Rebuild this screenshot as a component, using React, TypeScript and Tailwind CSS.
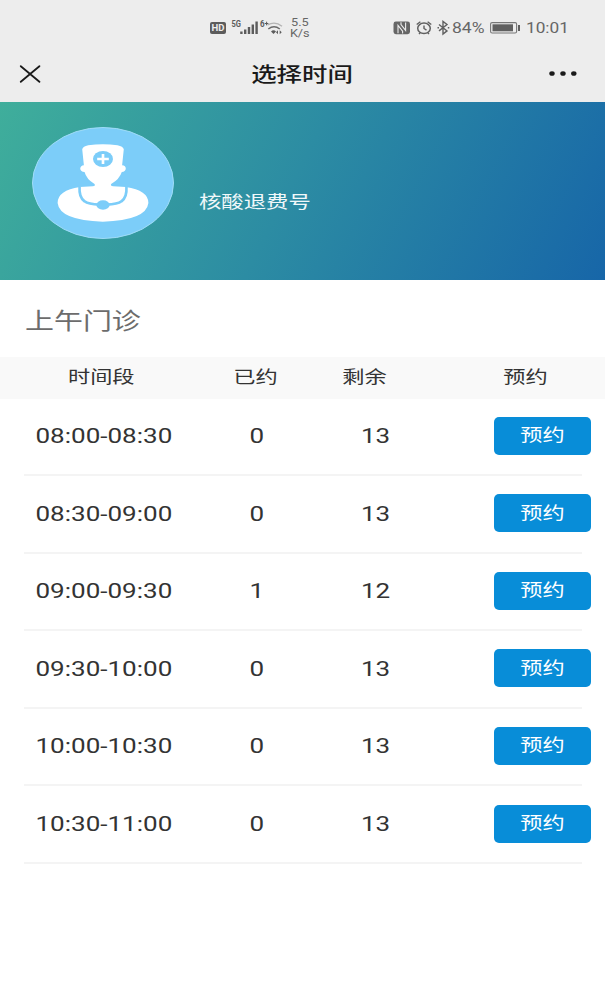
import { ReactNode } from "react";

type Slot = {
  time: string;
  booked: number;
  left: number;
};

const slots: Slot[] = [
  { time: "08:00-08:30", booked: 0, left: 13 },
  { time: "08:30-09:00", booked: 0, left: 13 },
  { time: "09:00-09:30", booked: 1, left: 12 },
  { time: "09:30-10:00", booked: 0, left: 13 },
  { time: "10:00-10:30", booked: 0, left: 13 },
  { time: "10:30-11:00", booked: 0, left: 13 },
];

type WideProps = {
  children: ReactNode;
  className?: string;
};

// wide lettering used all over the page
function Wide({ children, className = "" }: WideProps) {
  return (
    <span className={`inline-block whitespace-nowrap scale-x-[1.27] ${className}`}>
      {children}
    </span>
  );
}

function StatusBar() {
  return (
    <div className="flex h-[46px] items-start pl-[210px] pt-[17px] text-[#666]">
      <svg width="74" height="22" viewBox="210 17 74 22" fill="none">
        <rect x="210" y="22" width="16" height="12" rx="2" fill="#5c5c5c" />
        <text x="211.5" y="31.4" fontSize="9" fontWeight="700" textLength="13" lengthAdjust="spacingAndGlyphs" fill="#eee">
          HD
        </text>
        <text x="231.5" y="27.3" fontSize="9" fontWeight="700" textLength="9.5" lengthAdjust="spacingAndGlyphs" fill="#5c5c5c">
          5G
        </text>
        <path
          d="M241.4 31.5V34M245.2 29.5V34M249 27V34M252.8 24.5V34M256.6 21.5V34"
          stroke="#5c5c5c"
          strokeWidth="2.4"
        />
        <text x="260" y="27.3" fontSize="9" fontWeight="700" textLength="4.6" lengthAdjust="spacingAndGlyphs" fill="#5c5c5c">
          6
        </text>
        <path d="M264.8 23.5h3.6M266.6 21.7v3.6" stroke="#5c5c5c" />
        <path d="M267.5 25Q275 20.8 282 26.2" stroke="#b4b4b4" strokeWidth="1.4" />
        <path d="M268.3 29Q274 24.4 279.8 29" stroke="#6a6a6a" strokeWidth="1.5" />
        <path d="M271 31.4Q273.5 29.3 276 31.4L273.5 34z" fill="#5c5c5c" />
        <path d="M276 32.2l2-2v4zM281.7 32.2l-2-2v4z" fill="#5c5c5c" />
      </svg>
      <div className="flex w-[31px] flex-col items-center text-[10px] leading-[11px]">
        <Wide>5.5</Wide>
        <Wide>K/s</Wide>
      </div>
      <svg className="ml-[76px]" width="60" height="22" viewBox="391 17 60 22" fill="none">
        <rect x="393.5" y="21.6" width="16.5" height="12.6" rx="2.4" fill="#666" />
        <path d="M398 33.2V25.3l4.6 5.8v2.4M401 22.3v2.3l4.6 5.8V22.6" stroke="#ededed" strokeWidth="1.1" />
        <ellipse cx="424" cy="28.3" rx="6.3" ry="5.2" stroke="#606060" strokeWidth="1.5" />
        <path d="M424 25.5v3l2.5 1.7M416.7 24.5l3.7-2.8M431.3 24.5l-3.7-2.8M419 34l1.2-1.3M429 34l-1.2-1.3" stroke="#606060" strokeWidth="1.4" />
        <path d="M439 24.5l8 6.4-4 3.1V21.5l4 3-8 6.4" stroke="#606060" strokeWidth="1.4" />
        <path d="M437.5 27h1.5v1.6h-1.5zM447.8 27h1.5v1.6h-1.5z" fill="#606060" />
      </svg>
      <span className="ml-px w-[37px] origin-left scale-x-[1.25] text-[14px] leading-[22px]">84%</span>
      <svg width="32" height="22" viewBox="489 17 32 22" fill="none">
        <rect x="490.6" y="22.6" width="26" height="10.4" rx="1.5" stroke="#777" strokeWidth="1.1" />
        <rect x="492.5" y="24.3" width="20.5" height="7" fill="#606060" />
        <path d="M519 25v6" stroke="#606060" strokeWidth="2" />
      </svg>
      <span className="ml-[5px] origin-left scale-x-[1.23] text-[14px] leading-[22px]">10:01</span>
    </div>
  );
}

function NavBar() {
  return (
    <div className="flex h-[55.5px] items-center justify-between pl-[19px] pr-[28px] text-[#1a1a1a]">
      <svg width="22" height="18" viewBox="0 0 22 18" fill="none" stroke="currentColor" strokeWidth="1.8" strokeLinecap="round">
        <path d="M1.8 1.2l18.6 15.6M20.4 1.2L1.8 16.8" />
      </svg>
      <Wide className="ml-[14px] pt-[2px] text-[20px] font-medium">选择时间</Wide>
      <svg width="29" height="6" viewBox="0 0 29 6" fill="currentColor">
        <ellipse cx="4" cy="2.5" rx="2.7" ry="2.3" />
        <ellipse cx="15" cy="2.5" rx="2.7" ry="2.3" />
        <ellipse cx="25.8" cy="2.5" rx="2.7" ry="2.3" />
      </svg>
    </div>
  );
}

function DoctorAvatar() {
  return (
    <svg width="142" height="112" viewBox="36 36 427 336" preserveAspectRatio="none">
      <ellipse cx="249.5" cy="204" rx="212" ry="166.5" fill="#7ccdf9" stroke="#a0dcf7" strokeWidth="3" />
      <path
        d="M187 103Q189 94 205 91Q249 84 293 91Q310 94 312 103L307 151Q318 152 318 161Q317 170 306 171Q299 193 274 207Q271 213 280 214L318 216Q386 226 386 264Q380 316 249 320Q119 316 113 264Q113 226 180 216L219 214Q228 213 224 207Q200 193 194 171Q182 170 181 161Q182 152 192 151Z"
        fill="#fff"
      />
      <ellipse cx="249.5" cy="132" rx="30" ry="24" fill="#7ccdf9" />
      <path d="M249.5 117v30M232 132h35" stroke="#fff" strokeWidth="8" />
      <path
        d="M179 216Q177 247 194 259Q205 268 239 269M320 216Q322 247 305 259Q294 268 260 269"
        fill="none"
        stroke="#7ccdf9"
        strokeWidth="8"
      />
      <ellipse cx="249.5" cy="270" rx="20" ry="14" fill="#7ccdf9" />
    </svg>
  );
}

function SlotRow({ time, booked, left }: Slot) {
  return (
    <div className="ml-6 flex h-[77.6px] w-[558px] items-center border-b-2 border-[#f4f4f4] text-[20.5px] text-[#333]">
      <div className="w-[159px] shrink-0 text-center">
        <Wide>{time}</Wide>
      </div>
      <div className="w-[148px] shrink-0 text-center">
        <Wide>{booked}</Wide>
      </div>
      <div className="w-[90px] shrink-0 text-center">
        <Wide>{left}</Wide>
      </div>
      <button className="mb-[1.5px] ml-[72.5px] h-[38px] w-[97.5px] shrink-0 rounded-[5px] bg-[#088dd8] pb-px text-[17.5px] text-white">
        <Wide>预约</Wide>
      </button>
    </div>
  );
}

function App() {
  return (
    <main className="h-[984px] w-[605px] overflow-hidden bg-white font-['Roboto','Noto_Sans_CJK_SC',sans-serif]">
      <header className="bg-[#ededed]">
        <StatusBar />
        <NavBar />
      </header>

      <section className="flex h-[178.5px] bg-[linear-gradient(117deg,#3fae9b_0%,#2c8ca3_48%,#1766a8_100%)] pl-8 pt-[25.5px]">
        <DoctorAvatar />
        <Wide className="ml-[24.5px] mt-[62px] origin-left self-start text-[17.6px] leading-[26px] text-[#f0f8fa]">
          核酸退费号
        </Wide>
      </section>

      <h2 className="flex h-[76.5px] items-center pl-[24.5px] pt-[8px] text-[22.8px] text-[#6c6c6c]">
        <Wide className="origin-left">上午门诊</Wide>
      </h2>

      <div className="flex h-[42px] items-center bg-[#f9f9f9] pb-px text-center text-[17.5px] text-[#333]">
        <div className="w-[203px]">
          <Wide>时间段</Wide>
        </div>
        <div className="w-[104px]">
          <Wide>已约</Wide>
        </div>
        <div className="w-[115px]">
          <Wide>剩余</Wide>
        </div>
        <div className="ml-6 w-[159px]">
          <Wide>预约</Wide>
        </div>
      </div>

      {slots.map((slot) => (
        <SlotRow key={slot.time} {...slot} />
      ))}
    </main>
  );
}

export default App;
